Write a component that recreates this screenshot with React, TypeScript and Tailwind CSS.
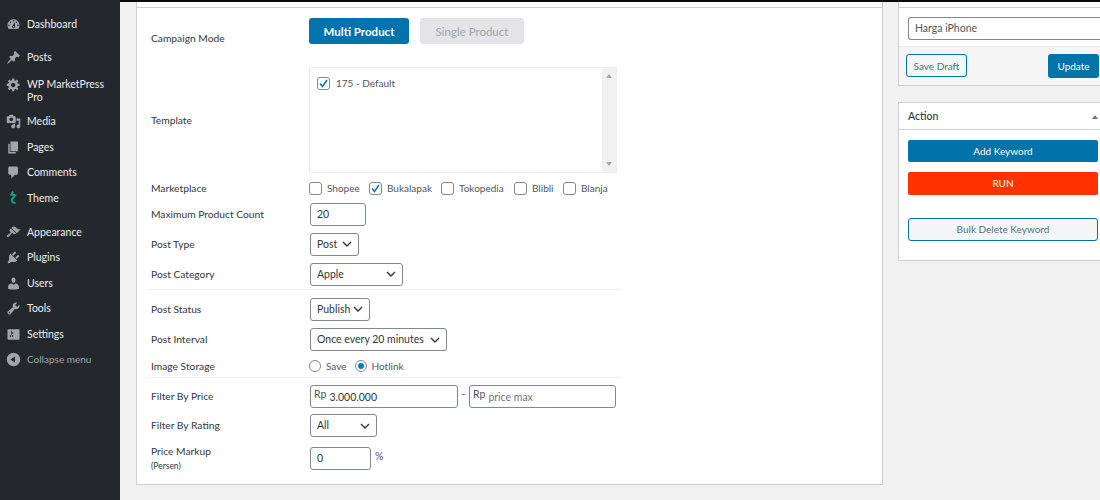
import React from 'react';

const menu: { label: React.ReactNode; d?: string; h: string; mt?: string; theme?: boolean; top?: boolean }[] = [
    {
        label: 'Dashboard',
        h: 'h-[26px]',
        mt: 'mt-[11px]',
        d: 'M3.76 16h12.48c1.1-1.37 1.76-3.11 1.76-5 0-4.42-3.58-8-8-8s-8 3.58-8 8c0 1.89.66 3.63 1.76 5zM10 4c.55 0 1 .45 1 1s-.45 1-1 1-1-.45-1-1 .45-1 1-1zM6 6c.55 0 1 .45 1 1s-.45 1-1 1-1-.45-1-1 .45-1 1-1zm8 0c.55 0 1 .45 1 1s-.45 1-1 1-1-.45-1-1 .45-1 1-1zm-5.37 5.55L12 7v6c0 1.1-.9 2-2 2s-2-.9-2-2c0-.57.24-1.08.63-1.45zM4 10c.55 0 1 .45 1 1s-.45 1-1 1-1-.45-1-1 .45-1 1-1zm12 0c.55 0 1 .45 1 1s-.45 1-1 1-1-.45-1-1 .45-1 1-1zm-5 3c0-.55-.45-1-1-1s-1 .45-1 1 .45 1 1 1 1-.45 1-1z',
    },
    {
        label: 'Posts',
        h: 'h-[26px]',
        mt: 'mt-[7px]',
        d: 'M10.44 3.02l1.82-1.82 6.36 6.35-1.83 1.82c-1.05-.68-2.48-.57-3.41.36l-.75.75c-.92.93-1.04 2.35-.35 3.41l-1.83 1.82-2.41-2.41-2.8 2.79c-.42.42-3.38 2.71-3.8 2.29s1.86-3.39 2.28-3.81l2.79-2.79L4.1 9.36l1.83-1.82c1.05.69 2.48.57 3.41-.36l.75-.75c.93-.92 1.04-2.35.35-3.41z',
    },
    {
        label: (
            <>
                WP MarketPress
                <br />
                Pro
            </>
        ),
        h: 'h-[39px]',
        top: true,
        d: 'M18 12h-2.18c-.17.7-.44 1.35-.81 1.93l1.54 1.54-2.1 2.1-1.54-1.54c-.58.36-1.23.63-1.91.79V19H8v-2.18c-.68-.16-1.33-.43-1.91-.79l-1.54 1.54-2.12-2.12 1.54-1.54c-.36-.58-.63-1.23-.79-1.91H1V9.03h2.17c.16-.7.44-1.35.8-1.94L2.43 5.55l2.1-2.1 1.54 1.54c.58-.37 1.24-.64 1.93-.81V2h3v2.18c.68.16 1.33.43 1.91.79l1.54-1.54 2.12 2.12-1.54 1.54c.36.59.64 1.24.8 1.94H18V12zm-8.5 1.5c1.66 0 3-1.34 3-3s-1.34-3-3-3-3 1.34-3 3 1.34 3 3 3z',
    },
    {
        label: 'Media',
        h: 'h-[25px]',
        d: 'M13 11V4c0-.55-.45-1-1-1h-1.67L9 1H5L3.67 3H2c-.55 0-1 .45-1 1v7c0 .55.45 1 1 1h10c.55 0 1-.45 1-1zM7 4.5c1.38 0 2.5 1.12 2.5 2.5S8.38 9.5 7 9.5 4.5 8.38 4.5 7 5.62 4.5 7 4.5zM14 6h5v10.5c0 1.38-1.12 2.5-2.5 2.5S14 17.88 14 16.5s1.12-2.5 2.5-2.5c.17 0 .34.02.5.05V9h-3V6zm-4 8.05V13h2v3.5c0 1.38-1.12 2.5-2.5 2.5S7 17.88 7 16.5 8.12 14 9.5 14c.17 0 .34.02.5.05z',
    },
    { label: 'Pages', h: 'h-[26px]', d: 'M6 15V2h10v13H6zm-1 1h8v2H3V5h2v11z' },
    {
        label: 'Comments',
        h: 'h-[25px]',
        d: 'M5 2h9c1.1 0 2 .9 2 2v7c0 1.1-.9 2-2 2h-2l-5 5v-5H5c-1.1 0-2-.9-2-2V4c0-1.1.9-2 2-2z',
    },
    { label: 'Theme', h: 'h-[26px]', theme: true },
    {
        label: 'Appearance',
        h: 'h-[26px]',
        mt: 'mt-2',
        d: 'M14.48 11.06L7.41 3.99l1.5-1.5c.5-.56 2.3-.47 3.51.32 1.21.8 1.43 1.28 2.91 2.1 1.18.64 2.45 1.26 4.45.85zm-.71.71L6.7 4.7 4.93 6.47c-.39.39-.39 1.02 0 1.41l1.06 1.06c.39.39.39 1.03 0 1.42-.6.6-1.43 1.11-2.21 1.69-.35.26-.7.53-1.01.84C1.43 13.23.4 14.85 1.25 15.7c.84.84 2.47-.18 3.83-1.53.3-.3.58-.65.84-1 .57-.78 1.08-1.61 1.69-2.22.39-.39 1.02-.39 1.41 0l1.06 1.06c.39.39 1.02.39 1.41 0z',
    },
    {
        label: 'Plugins',
        h: 'h-[25px]',
        d: 'M13.11 4.36L9.87 7.6 8 5.73l3.24-3.24c.35-.34 1.05-.2 1.56.32.52.51.66 1.21.31 1.55zm-8 1.77l.91-1.12 9.01 9.01-1.19.84c-.71.71-2.63 1.16-3.82 1.16H6.14L4.9 17.26c-.59.59-1.54.59-2.12 0-.59-.58-.59-1.53 0-2.12l1.24-1.24v-3.88c0-1.13.4-3.19 1.09-3.89zm7.26 3.97l3.24-3.24c.34-.35 1.04-.21 1.55.31.52.51.66 1.21.31 1.55l-3.24 3.25z',
    },
    {
        label: 'Users',
        h: 'h-[26px]',
        d: 'M10 9.25c-2.27 0-2.73-3.44-2.73-3.44C7 4.02 7.82 2 9.97 2c2.16 0 2.98 2.02 2.71 3.81 0 0-.41 3.44-2.68 3.44zm0 2.57L12.72 10c2.39 0 4.52 2.33 4.52 4.53v2.49s-3.65 1.13-7.24 1.13c-3.65 0-7.24-1.13-7.24-1.13v-2.49c0-2.25 1.94-4.48 4.47-4.48z',
    },
    {
        label: 'Tools',
        h: 'h-[25px]',
        d: 'M16.68 9.77c-1.34 1.34-3.3 1.67-4.95.99l-5.41 6.52c-.99.99-2.59.99-3.58 0s-.99-2.59 0-3.57l6.52-5.42c-.68-1.65-.35-3.61.99-4.95 1.28-1.28 3.12-1.62 4.72-1.06l-2.89 2.89 2.82 2.82 2.86-2.87c.53 1.58.18 3.39-1.08 4.65zM3.81 16.21c.4.39 1.04.39 1.43 0 .4-.4.4-1.04 0-1.43-.39-.4-1.03-.4-1.43 0-.39.39-.39 1.03 0 1.43z',
    },
    {
        label: 'Settings',
        h: 'h-[26px]',
        d: 'M18 16V4c0-.55-.45-1-1-1H3c-.55 0-1 .45-1 1v12c0 .55.45 1 1 1h14c.55 0 1-.45 1-1zM8 11h1c.55 0 1 .45 1 1s-.45 1-1 1H8v1.5c0 .28-.22.5-.5.5s-.5-.22-.5-.5V13H6c-.55 0-1-.45-1-1s.45-1 1-1h1V5.5c0-.28.22-.5.5-.5s.5.22.5.5V7h1c.55 0 1 .45 1 1s-.45 1-1 1h-1v5.5c0 .28-.22.5-.5.5s-.5-.22-.5-.5V9z',
    },
];

const Chevron = () => (
    <svg width="10" height="6" viewBox="0 0 10 6" fill="none" stroke="#32373c" strokeWidth="1.4" className="shrink-0">
        <path d="M1 1l4 4 4-4" />
    </svg>
);

const Row = ({ label, h, children }: { label: React.ReactNode; h: string; children: React.ReactNode }) => (
    <div className={`flex items-center ${h}`}>
        <div className="w-[158px] shrink-0 text-[10.25px] text-[#32373c]">{label}</div>
        {children}
    </div>
);

const Select = ({ value, w }: { value: string; w: string }) => (
    <div
        className={`flex h-[23px] ${w} items-center justify-between rounded-[3px] border border-[#7e8993] bg-white px-[6px] text-[10.5px] text-[#32373c]`}
    >
        <span>{value}</span>
        <Chevron />
    </div>
);

const Check = ({ checked }: { checked?: boolean }) => (
    <span className="flex h-[13px] w-[13px] shrink-0 items-center justify-center rounded-[3px] border border-[#7e8993] bg-white">
        {checked && (
            <svg width="11" height="11" viewBox="0 0 11 11" fill="none" stroke="#0a7bba" strokeWidth="1.6">
                <path d="M2 5.5l2.5 3L9 2" />
            </svg>
        )}
    </span>
);

const Market = ({ name, checked, w }: { name: string; checked?: boolean; w: string }) => (
    <div className={`flex shrink-0 items-center gap-[5px] ${w}`}>
        <Check checked={checked} />
        <span className="text-[10px] text-[#50575e]">{name}</span>
    </div>
);

const PriceInput = ({ value, placeholder, w }: { value?: string; placeholder?: boolean; w: string }) => (
    <div className={`flex h-[23px] ${w} rounded-[3px] border border-[#7e8993] bg-white pl-[3px]`}>
        <span className="mt-[2px] text-[#50575e]">Rp</span>
        <span className={`ml-[3px] mt-[5px] text-[10.5px] ${placeholder ? 'text-[#72777c]' : 'text-[#32373c]'}`}>
            {value}
        </span>
    </div>
);

export default function App() {
    return (
        <div className="flex h-[500px] w-[1100px] overflow-hidden bg-[#f1f1f1] font-['Lato','Open_Sans',sans-serif] text-[10.5px] leading-[13px]">
            <aside className="flex w-[120px] shrink-0 flex-col bg-[#23282d] text-[10.5px] text-[#eeeeee]">
                {menu.map((item, i) => (
                    <div
                        key={i}
                        className={`flex ${item.top ? 'items-start pt-[8px]' : 'items-center'} ${item.h} ${item.mt ?? ''}`}
                    >
                        <div className={`flex w-[27px] shrink-0 justify-center ${item.top ? '-mt-[1px]' : ''}`}>
                            {item.theme ? (
                                <svg width="12" height="16" viewBox="0 0 12 16" fill="none" stroke="#12a085" strokeWidth="2">
                                    <path d="M5 1.5l-1.5 3 3.5 .8-3 4c-.6 1.5 .2 3.6 3.5 3.7" />
                                </svg>
                            ) : (
                                <svg width="15" height="15" viewBox="0 0 20 20" fill="#a0a5aa">
                                    <path d={item.d} />
                                </svg>
                            )}
                        </div>
                        <span>{item.label}</span>
                    </div>
                ))}
                <div className="flex h-[25px] items-center text-[10px] text-[#a0a5aa]">
                    <div className="flex w-[27px] shrink-0 justify-center">
                        <svg width="15" height="15" viewBox="0 0 20 20" fill="#a0a5aa">
                            <path fillRule="evenodd" d="M10 1a9 9 0 1 0 0 18 9 9 0 0 0 0-18zm2 5v8l-6-4z" />
                        </svg>
                    </div>
                    <span>Collapse menu</span>
                </div>
            </aside>

            <main className="flex min-w-0 flex-1 flex-col">
                <div className="h-[2px] shrink-0 bg-[#0a0a0a]" />
                <div className="flex min-h-0 flex-1 items-start pl-4">
                    <section className="flex h-[483px] w-[747px] shrink-0 flex-col border border-t-0 border-[#ccd0d4] bg-white">
                        <div className="h-[6px] shrink-0 border-b border-[#ccd0d4] bg-white" />
                        <div className="flex flex-col pl-[14px]">
                            <div className="w-[472px]">
                                <div className="flex h-[55px] items-start pt-[10px]">
                                    <div className="w-[158px] shrink-0 pt-[14px] text-[10.25px] text-[#32373c]">Campaign Mode</div>
                                    <div className="flex h-[26px] w-[100px] items-center justify-center rounded-[3px] bg-[#0073aa] text-[11.5px] font-bold text-white">
                                        Multi Product
                                    </div>
                                    <div className="ml-[11px] flex h-[26px] w-[104px] items-center justify-center rounded-[3px] bg-[#e2e4e7] text-[11.5px] text-[#a0a5aa]">
                                        Single Product
                                    </div>
                                </div>
                                <Row label="Template" h="h-[114px]">
                                    <div className="relative h-[106px] w-[308px] shrink-0 border border-[#eeeeee] bg-white pl-[7px] pt-[9px] text-[10px] text-[#50575e]">
                                        <div className="flex items-center gap-[6px]">
                                            <Check checked />
                                            <span>175 - Default</span>
                                        </div>
                                        <div className="absolute bottom-0 right-0 top-0 flex w-[14px] flex-col items-center justify-between bg-[#f1f1f1] py-[6px]">
                                            <span className="h-0 w-0 border-x-[3.5px] border-b-[4px] border-x-transparent border-b-[#a0a5aa]" />
                                            <span className="h-0 w-0 border-x-[3.5px] border-t-[4px] border-x-transparent border-t-[#a0a5aa]" />
                                        </div>
                                    </div>
                                </Row>
                                <Row label="Marketplace" h="h-[23px]">
                                    <Market name="Shopee" w="w-[60px]" />
                                    <Market name="Bukalapak" checked w="w-[72px]" />
                                    <Market name="Tokopedia" w="w-[73px]" />
                                    <Market name="Blibli" w="w-[49px]" />
                                    <Market name="Blanja" w="w-[44px]" />
                                </Row>
                                <Row label="Maximum Product Count" h="h-[29px]">
                                    <div className="ml-[1px] flex h-[23px] w-[56px] items-center rounded-[3px] border border-[#7e8993] bg-white pl-[6px] text-[#32373c]">
                                        20
                                    </div>
                                </Row>
                                <Row label="Post Type" h="h-[30px]">
                                    <div className="ml-[1px]">
                                        <Select value="Post" w="w-[49px]" />
                                    </div>
                                </Row>
                                <Row label="Post Category" h="h-[30px]">
                                    <div className="ml-[1px]">
                                        <Select value="Apple" w="w-[93px]" />
                                    </div>
                                </Row>
                            </div>
                            <div className="-ml-[4px] h-[1px] w-[475px] bg-[#f0f0f0]" />
                            <div className="w-[472px]">
                                <Row label="Post Status" h="h-[38px]">
                                    <div className="ml-[1px]">
                                        <Select value="Publish" w="w-[60px]" />
                                    </div>
                                </Row>
                                <Row label="Post Interval" h="h-[23px]">
                                    <div className="ml-[1px]">
                                        <Select value="Once every 20 minutes" w="w-[137px]" />
                                    </div>
                                </Row>
                                <Row label="Image Storage" h="h-[26px] pt-[4px]">
                                    <div className="flex items-center gap-[5px] text-[10px] text-[#50575e]">
                                        <span className="h-[12px] w-[12px] rounded-full border border-[#7e8993] bg-white" />
                                        <span>Save</span>
                                        <span className="ml-[3px] flex h-[12px] w-[12px] items-center justify-center rounded-full border border-[#7e8993] bg-white">
                                            <span className="h-[6px] w-[6px] rounded-full bg-[#0a7bba]" />
                                        </span>
                                        <span>Hotlink</span>
                                    </div>
                                </Row>
                            </div>
                            <div className="-ml-[4px] h-[1px] w-[475px] bg-[#f0f0f0]" />
                            <div className="w-[472px]">
                                <Row label="Filter By Price" h="h-[36px]">
                                    <div className="ml-[1px] flex items-center">
                                        <PriceInput value="3.000.000" w="w-[148px]" />
                                        <span className="mx-[3px] -mt-[4px] w-[5px] text-center text-[#50575e]">-</span>
                                        <PriceInput value="price max" placeholder w="w-[147px]" />
                                    </div>
                                </Row>
                                <Row label="Filter By Rating" h="h-[23px]">
                                    <div className="ml-[1px]">
                                        <Select value="All" w="w-[67px]" />
                                    </div>
                                </Row>
                                <div className="mt-[10px] flex h-[23px] items-center">
                                    <div className="w-[158px] shrink-0 text-[10.25px] text-[#32373c]">
                                        Price Markup
                                        <div className="mt-[2px] text-[8.5px] leading-[12px]">(Persen)</div>
                                    </div>
                                    <div className="ml-[1px] flex h-[23px] w-[61px] items-center rounded-[3px] border border-[#7e8993] bg-white pl-[6px] text-[#32373c]">
                                        0
                                    </div>
                                    <span className="-mt-[4px] ml-[4px] text-[#50575e]">%</span>
                                </div>
                            </div>
                        </div>
                    </section>

                    <div className="ml-[15px] flex w-[202px] shrink-0 flex-col">
                        <div className="border-b border-l border-[#ccd0d4] bg-white">
                            <div className="h-[6px] border-b border-[#ccd0d4] bg-white" />
                            <div className="flex h-[38px] items-center pl-[9px] pt-[2px]">
                                <div className="flex h-[23px] w-full items-center rounded-l-[3px] border border-r-0 border-[#7e8993] pl-[6px] text-[#50575e]">
                                    Harga iPhone
                                </div>
                            </div>
                            <div className="flex h-[39px] items-start justify-between border-t border-[#ececec] bg-[#f5f5f5] pl-[7px] pr-[1px] pt-[7px]">
                                <div className="flex h-[23px] w-[61px] items-center justify-center rounded-[3px] border border-[#0073aa] bg-[#f3f5f6] pt-[1px] text-[10px] text-[#50757f]">
                                    Save Draft
                                </div>
                                <div className="flex h-[24px] w-[51px] items-center justify-center rounded-[3px] bg-[#0073aa] text-[10px] text-white">
                                    Update
                                </div>
                            </div>
                        </div>
                        <div className="mt-[16px] flex h-[159px] flex-col border-b border-l border-t border-[#ccd0d4] bg-white">
                            <div className="flex h-[27px] shrink-0 items-center justify-between border-b border-[#ccd0d4] pl-[9px] pr-[2px] pt-[1px] text-[#23282d]">
                                <span>Action</span>
                                <span className="h-0 w-0 border-x-[3.5px] border-b-[4px] border-x-transparent border-b-[#72777c]" />
                            </div>
                            <div className="flex flex-col pl-[9px] pr-[2px] pt-[10px] text-[10px]">
                                <div className="flex h-[22px] items-center justify-center rounded-[2px] bg-[#0073aa] text-white">
                                    Add Keyword
                                </div>
                                <div className="mt-[10px] flex h-[23px] items-center justify-center rounded-[2px] bg-[#ff3300] text-white">
                                    RUN
                                </div>
                                <div className="mt-[23px] flex h-[23px] items-center justify-center rounded-[3px] border border-[#0073aa] bg-[#f3f5f6] text-[#50757f]">
                                    Bulk Delete Keyword
                                </div>
                            </div>
                        </div>
                    </div>
                </div>
            </main>
        </div>
    );
}
